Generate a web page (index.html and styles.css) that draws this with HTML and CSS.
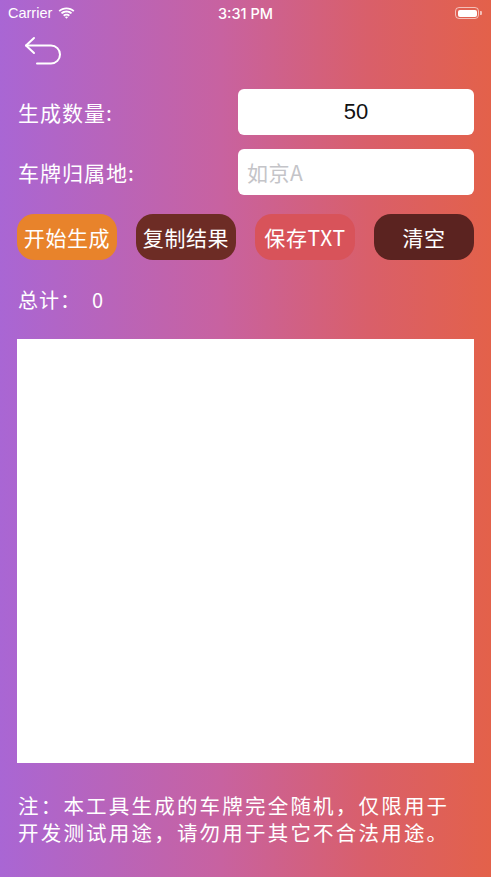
FILE: index.html
```html
<!DOCTYPE html>
<html lang="zh-CN">
<head>
<meta charset="utf-8">
<title>车牌生成</title>
<link rel="stylesheet" href="styles.css">
</head>
<body>
<div class="screen">
  <div class="status">
    <div class="status-left">
      <span class="carrier">Carrier</span>
      <svg class="wifi" width="17" height="12" viewBox="0 0 17 12">
        <path d="M8.5 2.2c2.6 0 4.9 1 6.7 2.6l1.2-1.3C14.3 1.6 11.5 0.4 8.5 0.4S2.7 1.6 0.6 3.5l1.2 1.3C3.6 3.2 5.9 2.2 8.5 2.2z" fill="#fff"/>
        <path d="M8.5 5.4c1.7 0 3.2 0.6 4.4 1.7l1.2-1.3C12.6 4.4 10.6 3.6 8.5 3.6S4.4 4.4 2.9 5.8l1.2 1.3C5.3 6 6.8 5.4 8.5 5.4z" fill="#fff"/>
        <path d="M8.5 8.6c0.9 0 1.6 0.3 2.2 0.8l1.2-1.3C11 7.3 9.8 6.8 8.5 6.8S6 7.3 5.1 8.1l1.2 1.3C6.9 8.9 7.6 8.6 8.5 8.6z" fill="#fff"/>
        <path d="M8.5 11.8l1.6-1.7c-0.4-0.4-1-0.6-1.6-0.6s-1.2 0.2-1.6 0.6z" fill="#fff"/>
      </svg>
    </div>
    <div class="time">3:31 PM</div>
    <div class="status-right">
      <div class="battery"><div class="battery-fill"></div></div>
      <div class="battery-nub"></div>
    </div>
  </div>

  <div class="nav">
    <svg class="back" width="40" height="34" viewBox="0 0 40 34">
      <path d="M10 4 L2 11.5 L10 19" fill="none" stroke="#fff" stroke-width="2" stroke-linecap="round" stroke-linejoin="round"/>
      <path d="M2 11.5 H27 A9 9 0 0 1 27 29.5 H13" fill="none" stroke="#fff" stroke-width="2" stroke-linecap="round" stroke-linejoin="round"/>
    </svg>
  </div>

  <div class="content">
    <div class="row">
      <div class="label">生成数量:</div>
      <div class="field value">50</div>
    </div>
    <div class="row">
      <div class="label">车牌归属地:</div>
      <div class="field placeholder">如京A</div>
    </div>

    <div class="buttons">
      <div class="btn btn-orange">开始生成</div>
      <div class="btn btn-brown">复制结果</div>
      <div class="btn btn-red">保存TXT</div>
      <div class="btn btn-dark">清空</div>
    </div>

    <div class="total"><span>总计：</span><span class="count">0</span></div>

    <div class="result"></div>

    <div class="note">
      <div class="note-line">注：本工具生成的车牌完全随机，仅限用于</div>
      <div class="note-line">开发测试用途，请勿用于其它不合法用途。</div>
    </div>
  </div>
</div>
</body>
</html>
```

FILE: styles.css
```css
* { box-sizing: border-box; }

html, body {
  margin: 0;
  padding: 0;
}

body {
  width: 491px;
  height: 877px;
  overflow: hidden;
  font-family: "Noto Sans CJK SC", "Noto Sans", sans-serif;
  color: #fff;
}

.screen {
  width: 491px;
  height: 877px;
  background: linear-gradient(90deg, #a966d4 0%, #c862a0 45%, #d95f6a 75%, #e3614a 100%);
  display: flex;
  flex-direction: column;
}

.status {
  height: 26px;
  display: flex;
  align-items: center;
  justify-content: space-between;
  padding: 0 9px 0 8px;
  position: relative;
}

.status-left {
  display: flex;
  align-items: center;
  gap: 6px;
}

.carrier {
  font-family: "Liberation Sans", "Inter", sans-serif;
  font-size: 14.5px;
  color: #fff;
}

.wifi { display: block; margin-top: -1px; }

.time {
  position: absolute;
  left: 0;
  right: 0;
  text-align: center;
  font-family: "Inter", "Liberation Sans", sans-serif;
  font-weight: 500;
  font-size: 14.5px;
  pointer-events: none;
}

.status-right {
  display: flex;
  align-items: center;
}

.battery {
  width: 24px;
  height: 12px;
  border: 1.2px solid rgba(255,255,255,0.6);
  border-radius: 4px;
  padding: 1.5px;
}

.battery-fill {
  width: 100%;
  height: 100%;
  background: #fff;
  border-radius: 2px;
}

.battery-nub {
  width: 1.6px;
  height: 4px;
  background: rgba(255,255,255,0.6);
  border-radius: 0 1px 1px 0;
  margin-left: 1px;
}

.nav {
  height: 63px;
  padding: 8px 0 0 24px;
}

.back { display: block; }

.content {
  padding: 0 17px;
  display: flex;
  flex-direction: column;
}

.row {
  display: flex;
  align-items: center;
  justify-content: space-between;
  height: 46px;
}

.row + .row { margin-top: 14px; }

.label {
  padding-left: 1px;
  font-size: 21px;
  letter-spacing: 1px;
}

.field {
  width: 236px;
  height: 46px;
  background: #fff;
  border-radius: 6px;
  display: flex;
  align-items: center;
  font-size: 21px;
}

.field.value {
  justify-content: center;
  color: #111;
  font-family: "Liberation Sans", "Inter", sans-serif;
  font-size: 22px;
}

.field.placeholder {
  padding-left: 9px;
  color: #c4c4c8;
  letter-spacing: 0.5px;
}

.buttons {
  margin-top: 19px;
  display: flex;
  justify-content: space-between;
}

.btn {
  width: 100px;
  height: 46px;
  border-radius: 17px;
  display: flex;
  align-items: center;
  justify-content: center;
  font-size: 21px;
  letter-spacing: 0.6px;
  color: #fff;
}

.btn-orange { background: #e8832b; }
.btn-brown { background: #6d2c25; }
.btn-red { background: #d8535a; }
.btn-dark { background: #5b2320; }

.total {
  margin-top: 26px;
  height: 28px;
  line-height: 28px;
  padding-left: 1px;
  font-size: 20px;
  letter-spacing: 1px;
  display: flex;
}

.count {
  margin-left: 11px;
}

.result {
  margin-top: 25px;
  height: 424px;
  background: #fff;
}

.note {
  margin-top: 29px;
  padding-left: 1px;
  display: flex;
  flex-direction: column;
}

.note-line {
  height: 27px;
  font-size: 20.5px;
  line-height: 27px;
  letter-spacing: 2.2px;
  white-space: nowrap;
}
```
